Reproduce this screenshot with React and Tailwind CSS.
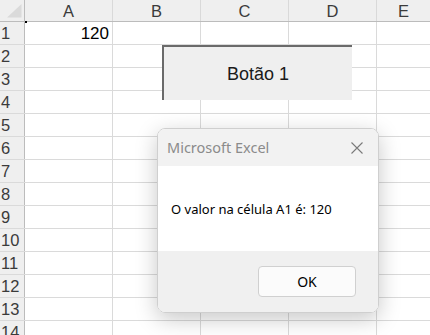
import React from "react";

const cols = ["A", "B", "C", "D", "E"];
const rows = Array.from({ length: 14 }, (_, i) => i + 1);

export default function App() {
  return (
    <div className="relative w-[430px] h-[335px] overflow-hidden bg-white" style={{ fontFamily: '"Liberation Sans", Arial, sans-serif' }}>
      {/* Column header */}
      <div className="flex h-[22px] box-border border-b border-[#bcbcbc] bg-[#efefef]">
        <div className="relative w-[25px] shrink-0 box-border border-r border-[#bcbcbc]">
          <svg className="absolute left-0 top-0" width="24" height="21" viewBox="0 0 24 21">
            <polygon points="7,17.5 21.5,17.5 21.5,4" fill="#dadada" />
          </svg>
        </div>
        {cols.map((c, i) => (
          <div
            key={c}
            className={`flex items-center justify-center pt-[1px] text-[16.5px] leading-none text-[#3b3b3b] box-border ${i < 4 ? "w-[88px] shrink-0 border-r border-[#d9d9d9]" : "flex-1"}`}
          >
            {c}
          </div>
        ))}
      </div>

      {/* Rows */}
      {rows.map((r) => (
        <div key={r} className="flex h-[23px] shrink-0 box-border border-b border-[#dadada]">
          <div className="w-[25px] shrink-0 box-border border-r border-[#bcbcbc] bg-[#efefef] flex items-center pl-[1px] pt-[1px] text-[16.5px] leading-none text-[#3b3b3b] whitespace-nowrap overflow-hidden">
            {r}
          </div>
          {cols.map((c, i) => (
            <div
              key={c}
              className={`box-border flex items-center justify-end pr-[3px] text-[17px] leading-none text-black ${i < 4 ? "w-[88px] shrink-0 border-r border-[#dadada]" : "flex-1"}`}
            >
              {r === 1 && c === "A" ? "120" : ""}
            </div>
          ))}
        </div>
      ))}

      {/* Active cell marker */}
      <div className="absolute left-[25px] top-[21px] w-[2px] h-[2px] bg-black" />

      {/* Form button */}
      <div className="absolute left-[162px] top-[45px] w-[190px] h-[55px] box-border border-t-2 border-l-2 border-[#6a6a6a] bg-[#efefef] flex items-center justify-center text-[18px] leading-none text-[#1a1a1a]">
        Botão 1
      </div>

      {/* Dialog */}
      <div
        className="absolute left-[157px] top-[128px] w-[222px] h-[185px] box-border border border-[#cfcfcf] rounded-[8px] overflow-hidden flex flex-col shadow-[0_6px_22px_rgba(0,0,0,0.22)]"
        style={{ fontFamily: '"Noto Sans", "Open Sans", sans-serif' }}
      >
        <div className="h-[37px] shrink-0 bg-[#f2f2f2] flex items-center justify-between pl-[9px] pr-[15px]">
          <span className="text-[14.5px] text-[#8b8b8b] leading-none">Microsoft Excel</span>
          <svg width="12" height="12" viewBox="0 0 12 12">
            <path d="M0.5 0.5 L11.5 11.5 M11.5 0.5 L0.5 11.5" stroke="#7a7a7a" strokeWidth="1.1" fill="none" />
          </svg>
        </div>
        <div className="h-[85px] shrink-0 bg-white flex items-center pl-[13px] pt-[2px]">
          <span className="text-[13px] text-black leading-none">O valor na célula A1 é: 120</span>
        </div>
        <div className="flex-1 bg-[#f0f0f0] flex items-center justify-end pr-[22px]">
          <div className="w-[98px] h-[31px] box-border border border-[#d0d0d0] rounded-[4px] bg-[#fbfbfb] flex items-center justify-center text-[14px] text-black leading-none">
            OK
          </div>
        </div>
      </div>
    </div>
  );
}
